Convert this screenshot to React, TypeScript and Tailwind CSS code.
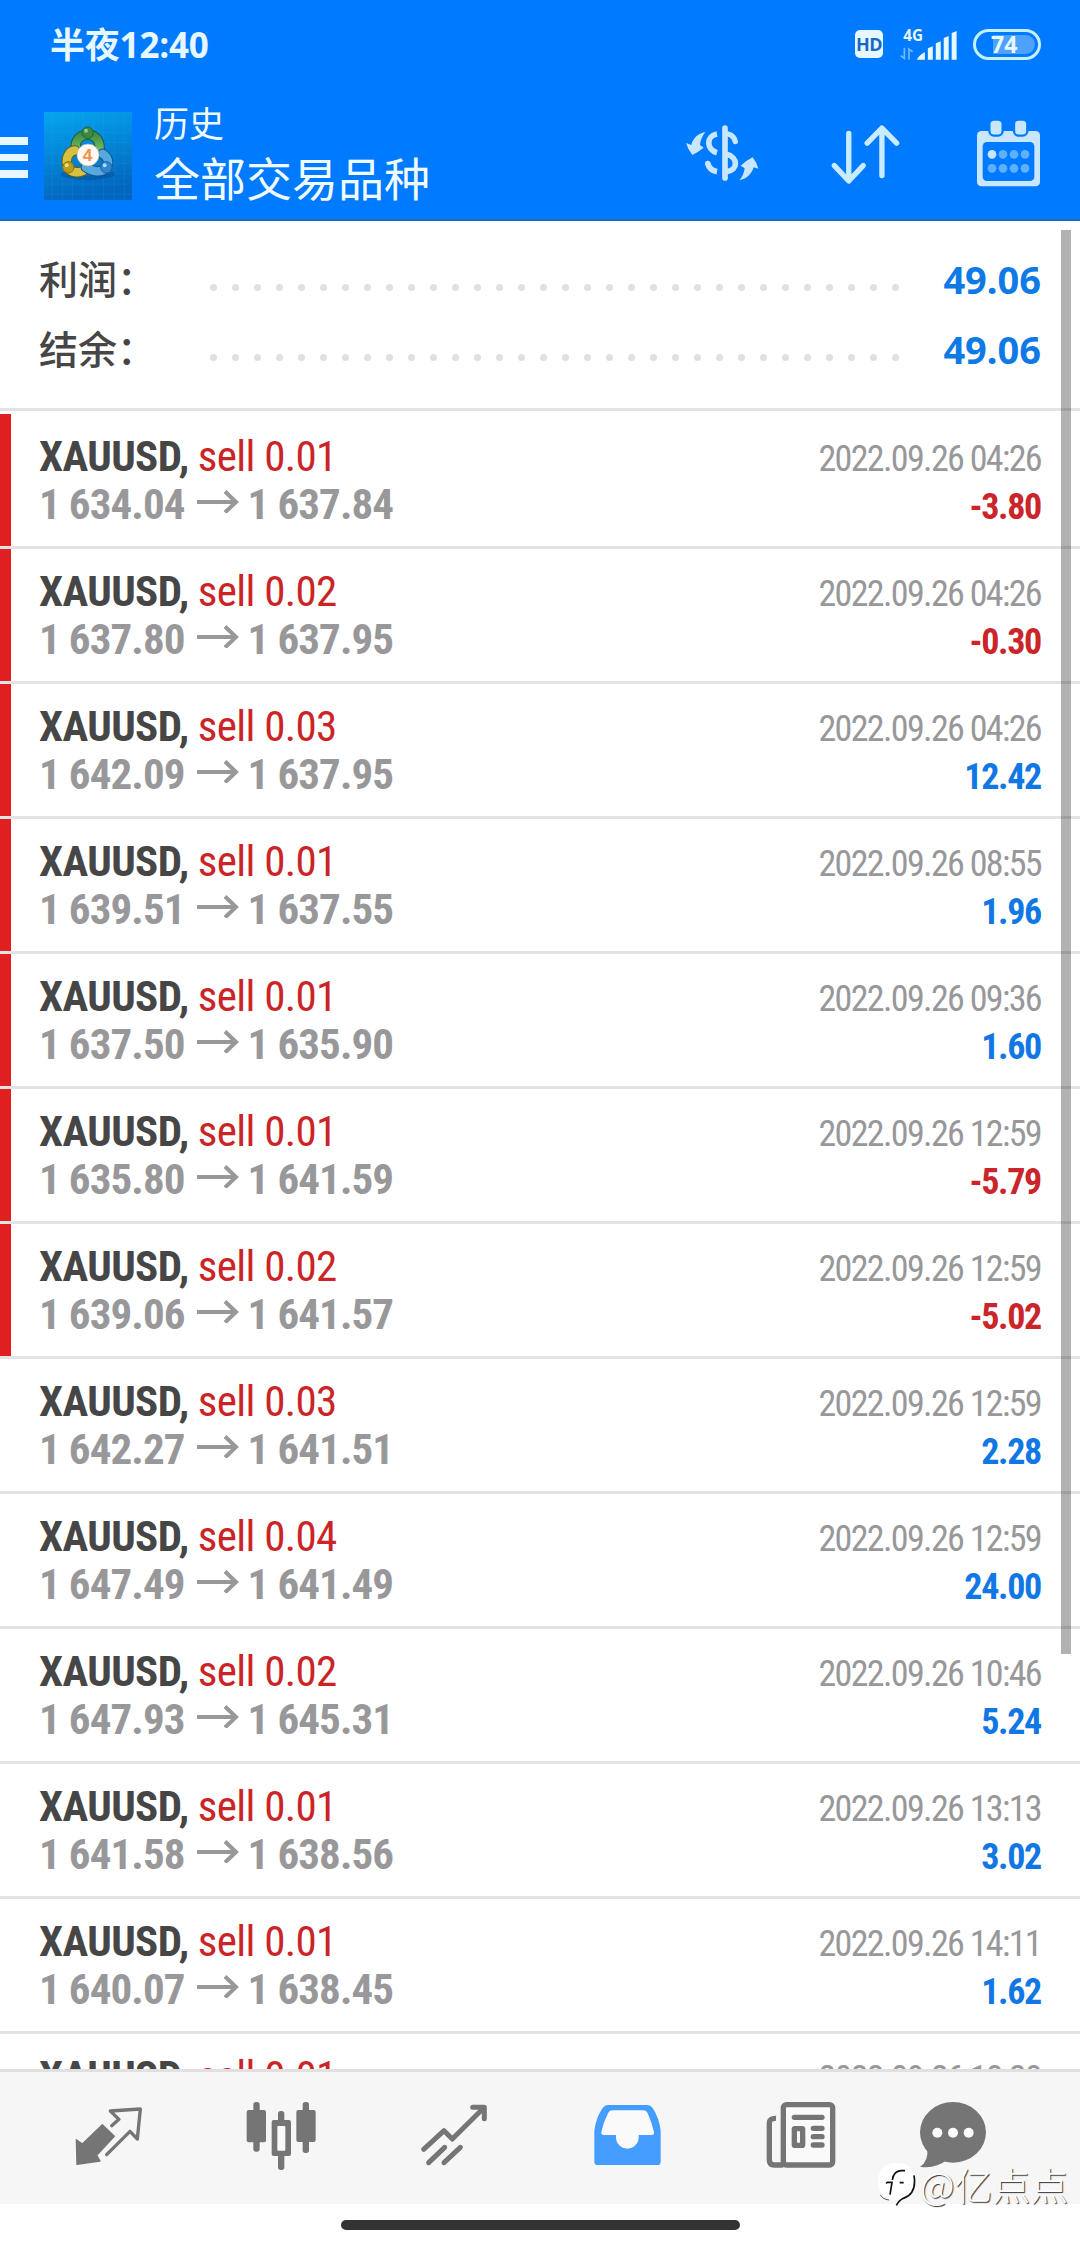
import clsx from "clsx";

interface Deal {
  volume: string;
  open: string;
  close: string;
  time: string;
  profit: string;
  marked?: boolean;
}

const DEALS: Deal[] = [
  { volume: "0.01", open: "1 634.04", close: "1 637.84", time: "2022.09.26 04:26", profit: "-3.80", marked: true },
  { volume: "0.02", open: "1 637.80", close: "1 637.95", time: "2022.09.26 04:26", profit: "-0.30", marked: true },
  { volume: "0.03", open: "1 642.09", close: "1 637.95", time: "2022.09.26 04:26", profit: "12.42", marked: true },
  { volume: "0.01", open: "1 639.51", close: "1 637.55", time: "2022.09.26 08:55", profit: "1.96", marked: true },
  { volume: "0.01", open: "1 637.50", close: "1 635.90", time: "2022.09.26 09:36", profit: "1.60", marked: true },
  { volume: "0.01", open: "1 635.80", close: "1 641.59", time: "2022.09.26 12:59", profit: "-5.79", marked: true },
  { volume: "0.02", open: "1 639.06", close: "1 641.57", time: "2022.09.26 12:59", profit: "-5.02", marked: true },
  { volume: "0.03", open: "1 642.27", close: "1 641.51", time: "2022.09.26 12:59", profit: "2.28" },
  { volume: "0.04", open: "1 647.49", close: "1 641.49", time: "2022.09.26 12:59", profit: "24.00" },
  { volume: "0.02", open: "1 647.93", close: "1 645.31", time: "2022.09.26 10:46", profit: "5.24" },
  { volume: "0.01", open: "1 641.58", close: "1 638.56", time: "2022.09.26 13:13", profit: "3.02" },
  { volume: "0.01", open: "1 640.07", close: "1 638.45", time: "2022.09.26 14:11", profit: "1.62" },
  { volume: "0.01", open: "1 640.02", close: "1 638.40", time: "2022.09.26 18:28", profit: "1.62" },
];

const SUMMARY = [
  { label: "利润：", value: "49.06" },
  { label: "结余：", value: "49.06" },
];

const DOTS = Array.from({ length: 32 }, (_, i) => i);

function StatusBar() {
  return (
    <div className="flex h-[88px] items-center pr-[39px] pl-[50px] text-[#e6f7ff]">
      <span className="font-['Open_Sans','Noto_Sans_CJK_SC',sans-serif] text-[35px] leading-none font-bold tracking-[-0.2px]">
        半夜12:40
      </span>
      <span className="ml-auto flex h-7 w-7 items-center justify-center rounded-[5px] bg-[#e6f7ff] font-['Open_Sans',sans-serif] text-[18px] font-bold tracking-[-0.5px] text-[#1569c4]">
        HD
      </span>
      <svg viewBox="780 60 175 136" className="ml-[17px] h-[45px] w-[58px]" fill="currentColor">
        <text x="790" y="117" fontSize="46" fontWeight="700" fontFamily="Open Sans, sans-serif">4G</text>
        <g opacity="0.5" fill="none" stroke="currentColor" strokeWidth="5">
          <path d="M793 138V170L782 162M807 174V142L818 150" />
        </g>
        <path d="M831 174Q834 164 852 152H855V174ZM864 139L879 133V174H864ZM888 124L903 118V174H888ZM912 108L927 102V174H912ZM936 93L951 87V174H936Z" />
      </svg>
      <div className="ml-[15px] flex h-[31px] w-[68px] items-center justify-center rounded-full border-[3px] border-[#c4f0ff] p-[3px]">
        <span className="flex h-full w-full items-center rounded-full bg-linear-to-r from-transparent from-25% to-[#4da2ff] to-25% pl-[12px] font-['Open_Sans',sans-serif] text-[23px] leading-none font-bold">
          74
        </span>
      </div>
    </div>
  );
}

function AppLogo() {
  return (
    <svg viewBox="133 275 264 264" className="h-[88px] w-[88px]">
      <defs>
        <linearGradient id="logoBg" x1="0" y1="0" x2="0.25" y2="1">
          <stop offset="0" stopColor="#06a5ee" />
          <stop offset="0.45" stopColor="#0389da" />
          <stop offset="1" stopColor="#0366be" />
        </linearGradient>
        <linearGradient id="logoGreen" x1="0" y1="0" x2="0" y2="1">
          <stop offset="0" stopColor="#3f8f45" />
          <stop offset="1" stopColor="#7ec46a" />
        </linearGradient>
      </defs>
      <rect x="133" y="275" width="264" height="264" fill="url(#logoBg)" />
      <path
        d="M157 275V539M188 275V539M219 275V539M250 275V539M281 275V539M312 275V539M343 275V539M374 275V539M133 305H397M133 336H397M133 367H397M133 398H397M133 429H397M133 460H397M133 491H397M133 522H397"
        stroke="#39b6f2"
        strokeOpacity="0.2"
        strokeWidth="2"
      />
      <path d="M190 462Q262 484 338 462" fill="none" stroke="#024a8c" strokeOpacity="0.45" strokeWidth="14" strokeLinecap="round" />
      <g strokeLinecap="round" fill="none">
        <path d="M230 388C222 360 243 343 264 343C286 343 306 360 298 398" stroke="#1d5a3c" strokeWidth="31" />
        <path d="M230 388C222 360 243 343 264 343C286 343 306 360 298 398" stroke="url(#logoGreen)" strokeWidth="25" />
        <path d="M226 390C206 392 194 418 206 444C216 458 236 458 250 452" stroke="#5f6420" strokeWidth="31" />
        <path d="M226 390C206 392 194 418 206 444C216 458 236 458 250 452" stroke="#d9c140" strokeWidth="25" />
        <path d="M308 400C326 410 330 428 320 442C304 460 278 454 258 440" stroke="#14508a" strokeWidth="31" />
        <path d="M308 400C326 410 330 428 320 442C304 460 278 454 258 440" stroke="#56a8de" strokeWidth="25" />
      </g>
      <circle cx="264" cy="337" r="17" fill="#3d8842" stroke="#23633a" strokeWidth="3" />
      <circle cx="206" cy="441" r="17" fill="#b89c1d" stroke="#7d711c" strokeWidth="3" />
      <circle cx="320" cy="441" r="17" fill="#2f86cc" stroke="#1c60a4" strokeWidth="3" />
      <circle cx="259" cy="331" r="6" fill="#8fcd86" />
      <circle cx="201" cy="435" r="6" fill="#f1e06c" />
      <circle cx="315" cy="435" r="6" fill="#a5dcff" />
      <circle cx="265" cy="404" r="33" fill="#fffaf5" stroke="#b9b39a" strokeWidth="2" />
      <text x="264" y="422" textAnchor="middle" fontSize="52" fontWeight="700" fontFamily="Liberation Sans, sans-serif" fill="#f0924a">4</text>
    </svg>
  );
}

function CurrencyIcon() {
  return (
    <svg viewBox="45 58 222 174" className="h-[58px] w-[74px]" fill="none" stroke="#c9e6ff">
      <path d="M165 70V220" strokeWidth="17" strokeLinecap="round" />
      <path d="M141 88C108 94 108 134 141 144M113 175C117 191 127 199 141 201" strokeWidth="17" />
      <path d="M113 176v0M174 88Q192 92 196 111" strokeWidth="16" strokeLinecap="round" />
      <path d="M170 149C205 158 205 196 170 201" strokeWidth="17" />
      <path d="M106 82C96 95 91 108 90 121L101 129Q85 142 67 151Q54 135 48 115L64 121C68 101 84 87 106 82Z" fill="#c9e6ff" stroke="none" />
      <path d="M208 227C217 217 222 205 224 191L212 183Q228 168 248 158Q260 173 265 192L251 188C245 209 228 223 208 227Z" fill="#c9e6ff" stroke="none" />
    </svg>
  );
}

function SortIcon() {
  return (
    <svg viewBox="480 58 212 182" className="h-[61px] w-[71px]" fill="none" stroke="#c9ebff" strokeWidth="16" strokeLinecap="round" strokeLinejoin="round">
      <path d="M536 86V227M493 182L536 228L579 182" />
      <path d="M635 72V212M591 115L635 70L679 115" />
    </svg>
  );
}

function CalendarIcon() {
  return (
    <svg viewBox="1008 360 195 204" className="h-[68px] w-[65px]">
      <rect x="1011" y="393" width="189" height="166" rx="13" fill="#c9e6ff" />
      <rect x="1028" y="426" width="155" height="117" rx="13" fill="#007aff" />
      <rect x="1048" y="359" width="40" height="48" rx="14" fill="#c9e6ff" stroke="#007aff" strokeWidth="7" />
      <rect x="1122" y="359" width="40" height="48" rx="14" fill="#c9e6ff" stroke="#007aff" strokeWidth="7" />
      <circle cx="1056" cy="463" r="13" fill="#c9e6ff" />
      <g fill="#5fb1ff">
        <circle cx="1089" cy="463" r="13" />
        <circle cx="1122" cy="463" r="13" />
        <circle cx="1155" cy="463" r="13" />
        <circle cx="1056" cy="505" r="13" />
        <circle cx="1089" cy="505" r="13" />
        <circle cx="1122" cy="505" r="13" />
        <circle cx="1155" cy="505" r="13" />
      </g>
    </svg>
  );
}

function Header() {
  return (
    <header className="h-[221px] border-b-2 border-[#1c6ab8] bg-[#007aff]">
      <StatusBar />
      <div className="flex h-[131px] items-start pr-[39px]">
        <div className="mt-[49px] flex w-7 flex-col gap-[9px]">
          <span className="h-[7.5px] bg-[#e6f7ff]" />
          <span className="h-[7.5px] bg-[#e6f7ff]" />
          <span className="h-[7.5px] bg-[#e6f7ff]" />
        </div>
        <div className="mt-[24px] ml-[16px]">
          <AppLogo />
        </div>
        <div className="mt-[6px] ml-[22px] font-['Noto_Sans_CJK_SC',sans-serif] text-[#f0fbff]">
          <p className="text-[35px] leading-[55px]">历史</p>
          <p className="text-[46px] leading-[55px]">全部交易品种</p>
        </div>
        <div className="mt-[36px] ml-auto flex items-start">
          <CurrencyIcon />
          <div className="ml-[71px]">
            <SortIcon />
          </div>
          <div className="-mt-[4px] ml-[75px]">
            <CalendarIcon />
          </div>
        </div>
      </div>
    </header>
  );
}

function SummaryRow({ label, value }: { label: string; value: string }) {
  return (
    <div className="flex h-[70px] items-baseline px-[39px] leading-[70px]">
      <span className="w-[171px] font-['Noto_Sans_CJK_SC',sans-serif] text-[39px] font-medium text-[#464646]">
        {label}
      </span>
      <span className="mt-[21px] flex gap-[15px] self-center">
        {DOTS.map((i) => (
          <span key={i} className="h-[7px] w-[7px] rounded-full bg-[#e0e0e0]" />
        ))}
      </span>
      <span className="ml-auto font-['Noto_Sans',sans-serif] text-[38px] font-bold text-[#0f79e6]">{value}</span>
    </div>
  );
}

function DealRow({ deal }: { deal: Deal }) {
  const loss = deal.profit.startsWith("-");

  return (
    <li className="flex h-[135px] shrink-0 border-b-3 border-[#e3e3e3] font-['Roboto_Condensed','Roboto',sans-serif]">
      <div className={clsx("w-[11px]", deal.marked && "bg-[#e02020]")} />
      <div className="flex-1 pt-[18px] pr-[39px] pl-[28px] leading-[48px]">
        <div className="flex h-[48px] items-baseline justify-between">
          <p className="text-[43px] tracking-[-0.6px] text-[#cb2427]">
            <span className="mr-[9px] font-bold text-[#464646]">XAUUSD,</span>
            sell {deal.volume}
          </p>
          <time className="text-[36px] tracking-[-1.65px] text-[#98989a]">{deal.time}</time>
        </div>
        <div className="flex h-[48px] items-baseline justify-between">
          <p className="flex text-[43px] font-bold tracking-[-0.9px] text-[#98989a]">
            <span>{deal.open}</span>
            <svg viewBox="0 0 42 24" className="mt-[9px] mr-[9px] ml-[12px] h-6 w-[42px]" fill="none" stroke="currentColor" strokeWidth="4">
              <path d="M0 13H39M28 2.5L39 13L28 23.5" />
            </svg>
            <span>{deal.close}</span>
          </p>
          <span className={clsx("text-[36px] font-bold tracking-[-1.3px]", loss ? "text-[#c9252b]" : "text-[#1177e4]")}>
            {deal.profit}
          </span>
        </div>
      </div>
    </li>
  );
}

function TabBar() {
  return (
    <nav className="flex h-[135px] items-start gap-[97px] border-t-3 border-[#e0e0e0] bg-[#f6f6f6] pt-[28px] pl-[71px] text-[#757575]">
      {/* quotes */}
      <svg viewBox="213 210 228 216" className="h-[72px] w-[76px]">
        <path d="M335 287L357 268L331 243L421 237L412 327L390 304L320 374" fill="none" stroke="currentColor" strokeWidth="10" strokeLinejoin="round" strokeLinecap="round" />
        <path d="M307 284L343 319L290 376L300 393L231 403L229 329L247 342Z" fill="currentColor" stroke="currentColor" strokeWidth="4" strokeLinejoin="round" />
      </svg>
      {/* charts */}
      <svg viewBox="732 210 228 216" className="h-[72px] w-[76px]" fill="currentColor">
        <rect x="760" y="216" width="19" height="149" rx="8" />
        <rect x="740" y="240" width="58" height="97" rx="6" />
        <rect x="908" y="216" width="19" height="153" rx="8" />
        <rect x="889" y="240" width="58" height="96" rx="6" />
        <rect x="834" y="243" width="19" height="177" rx="8" />
        <rect x="815" y="270" width="58" height="108" rx="6" />
        <rect x="832" y="288" width="24" height="74" rx="3" fill="#fafafa" />
      </svg>
      {/* trade */}
      <svg viewBox="111 210 228 216" className="h-[72px] w-[76px]" fill="none" stroke="currentColor" strokeWidth="15" strokeLinecap="round" strokeLinejoin="round">
        <path d="M131 358L192 302L217 327L310 235M278 232H313V266" />
        <path d="M146 398L194 352M192 398L241 352" />
      </svg>
      {/* history */}
      <svg viewBox="630 210 228 216" className="h-[72px] w-[76px] text-[#459dff]">
        <path
          fill="currentColor"
          d="M684 225H802Q812 225 818 234Q838 265 842 302V395Q842 405 832 405H653Q643 405 643 395V302Q648 262 668 234Q674 225 684 225Z"
        />
        <path
          fill="#fafafa"
          d="M696 241H790Q799 241 803 250Q816 280 822 306Q823 315 815 315H776V322A34 34 0 0 1 708 322V315H671Q663 315 664 306Q670 278 684 250Q688 241 696 241Z"
        />
      </svg>
      {/* news */}
      <svg viewBox="129 210 228 216" className="h-[72px] w-[76px]" fill="none" stroke="currentColor" strokeWidth="16" strokeLinecap="round">
        <rect x="190" y="224" width="148" height="181" rx="9" fill="#fafafa" />
        <path d="M168 265Q148 264 148 280V390Q148 405 163 405H190" strokeLinecap="butt" />
        <path d="M223 262H306M280 295H306M280 320H306M280 345H306" />
        <rect x="223" y="296" width="25" height="50" rx="2" />
      </svg>
      {/* messages */}
      <svg viewBox="588 210 228 216" className="-ml-[20px] h-[72px] w-[76px]">
        <ellipse cx="699" cy="307" rx="99" ry="91" fill="currentColor" />
        <path d="M622 355Q626 395 600 410Q645 418 684 388Z" fill="currentColor" />
        <circle cx="652" cy="308" r="15" fill="#fafafa" />
        <circle cx="699" cy="308" r="15" fill="#fafafa" />
        <circle cx="746" cy="308" r="15" fill="#fafafa" />
      </svg>
    </nav>
  );
}

function Watermark() {
  return (
    <div className="absolute top-[2160px] left-[876px] flex items-center">
      <svg viewBox="18 46 120 144" className="h-[48px] w-[40px]">
        <path d="M80 55C115 55 134 72 134 110C134 150 112 166 80 166C42 166 25 148 25 110C25 72 46 55 80 55Z" fill="#fff" />
        <g fill="none" stroke="#111" strokeWidth="5">
          <path d="M105 78H93Q71 79 67 106M48 116L52 113H66L60 150M89 114H101" />
          <path d="M132 92C138 130 128 152 100 161Q88 166 79 182" />
          <path d="M31 150Q38 164 57 166" strokeWidth="2" />
        </g>
      </svg>
      <span className="ml-[4px] font-['Noto_Sans_CJK_SC',sans-serif] text-[38px] leading-[48px] font-light text-white text-shadow-[1px_1px_1px_#333]">
        @亿点点
      </span>
    </div>
  );
}

export default function App() {
  return (
    <div className="relative flex h-[2248px] w-[1080px] flex-col overflow-hidden bg-white">
      <Header />
      <main className="flex h-[1848px] flex-col overflow-hidden">
        <section className="h-[190px] shrink-0 border-b-3 border-[#e3e3e3] pt-[21px]">
          {SUMMARY.map((row) => (
            <SummaryRow key={row.label} {...row} />
          ))}
        </section>
        <ul className="flex flex-col pt-[3px]">
          {DEALS.map((deal, i) => (
            <DealRow key={i} deal={deal} />
          ))}
        </ul>
      </main>
      <TabBar />
      <div className="flex flex-1 items-start justify-center pt-4">
        <div className="h-[10px] w-[399px] rounded-full bg-[#333]" />
      </div>
      <div className="absolute top-[230px] left-[1061px] h-[1424px] w-[10px] bg-black/30" />
      <Watermark />
    </div>
  );
}
